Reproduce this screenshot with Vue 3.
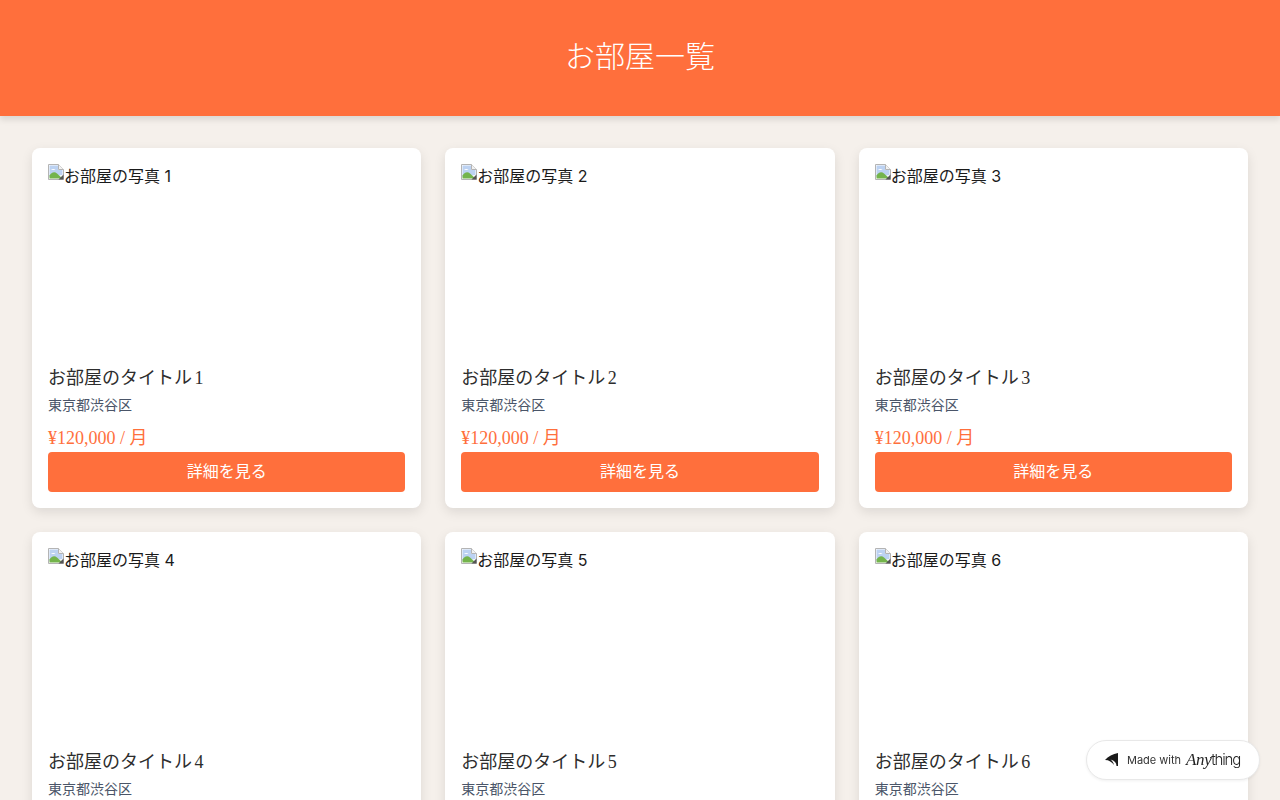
<template>
  <div class="page">
    <header class="top">
      <h1>お部屋一覧</h1>
    </header>
    <main class="grid">
      <article v-for="room in rooms" :key="room" class="card">
        <div class="photo">
          <svg class="broken" width="16" height="16" viewBox="0 0 16 16">
            <path d="M0.5 0.5H10.5L15.5 5.5V15.5H0.5Z" fill="#fff" stroke="#b4b4b4" />
            <path d="M1.5 1.5H10V6H14.5V11L1.5 13Z" fill="#bcd2f2" />
            <path d="M10.5 0.5V5.5H15.5" fill="#f2f2f2" stroke="#b4b4b4" />
            <path d="M3 6C4 4.5 6.5 4.5 7.5 6Z" fill="#fff" />
            <path d="M1.5 14.5V11.5C4 8 6.5 7.5 9 9.5L14.5 14.5Z" fill="#74b44c" />
            <path d="M10.5 15.5L15.5 10.5V15.5Z" fill="#555" />
          </svg><span>お部屋の写真 {{ room }}</span>
        </div>
        <h2>お部屋のタイトル {{ room }}</h2>
        <p class="area">東京都渋谷区</p>
        <p class="price">¥120,000 / 月</p>
        <button type="button">詳細を見る</button>
      </article>
    </main>
    <a class="made">
      <svg width="16" height="16" viewBox="0 0 16 16">
        <path d="M1 8C4 4.5 9 2 14 1V14H12.5C12.5 11 10.5 8.5 6.5 7.5C8 8.8 9.5 10.5 10 13C8 10 5 8 1 8Z" fill="#1a1a1a" />
      </svg>
      <span class="with">Made with</span>
      <span class="brand"><i>Any</i>thing</span>
    </a>
  </div>
</template>

<script setup>
const rooms = [1, 2, 3, 4, 5, 6]
</script>

<style>
html,
body {
  margin: 0;
  background: #f5f0eb;
  overflow: hidden;
}
</style>

<style scoped>
.page {
  min-height: 100vh;
  background: #f5f0eb;
  font-family: "Liberation Serif", "Noto Sans CJK JP", serif;
}

.top {
  background: #ff6f3c;
  padding: 32px 16px;
  box-shadow: 0 4px 6px rgba(0, 0, 0, 0.1);
}

h1 {
  margin: 0;
  height: 52px;
  line-height: 50px;
  color: #fff;
  font-size: 30px;
  font-weight: 300;
  text-align: center;
}

.grid {
  display: grid;
  grid-template-columns: repeat(3, 1fr);
  gap: 24px;
  padding: 32px;
}

.card {
  display: flex;
  flex-direction: column;
  padding: 16px;
  background: #fff;
  border-radius: 8px;
  box-shadow: 0 4px 12px rgba(0, 0, 0, 0.1);
}

.photo {
  height: 192px;
  color: #1a1a1a;
  font-family: Inter, "Noto Sans CJK JP", sans-serif;
  font-size: 16px;
  line-height: 24px;
}

.broken {
  vertical-align: top;
}

h2 {
  margin: 8px 0 0;
  color: #2d2d2d;
  font-size: 18px;
  font-weight: 400;
  line-height: 28px;
  word-spacing: -2px;
}

.area {
  margin: 4px 0 0;
  color: #4a5568;
  font-size: 14px;
  font-weight: 400;
  line-height: 20px;
}

.price {
  margin: 8px 0 0;
  color: #ff6f3c;
  font-size: 18px;
  line-height: 28px;
}

button {
  height: 40px;
  padding: 0 0 4px;
  border: 0;
  border-radius: 4px;
  background: #ff6f3c;
  color: #fff;
  font-family: Inter, "Noto Sans CJK JP", sans-serif;
  font-size: 16px;
}

.made {
  position: fixed;
  right: 20px;
  bottom: 20px;
  display: flex;
  align-items: center;
  height: 40px;
  padding: 0 19px 0 17px;
  box-sizing: border-box;
  background: #fff;
  border: 1px solid #e8e8e8;
  border-radius: 20px;
  box-shadow: 0 1px 3px rgba(0, 0, 0, 0.06);
  font-family: Inter, sans-serif;
}

.with {
  margin-left: 7px;
  color: #333;
  font-size: 11px;
}

.brand {
  margin-left: 5px;
  color: #222;
  font-size: 15px;
  font-weight: 300;
  letter-spacing: -1.2px;
}

.brand i {
  font-family: "Liberation Serif", serif;
  font-size: 17px;
  letter-spacing: -0.4px;
}
</style>
